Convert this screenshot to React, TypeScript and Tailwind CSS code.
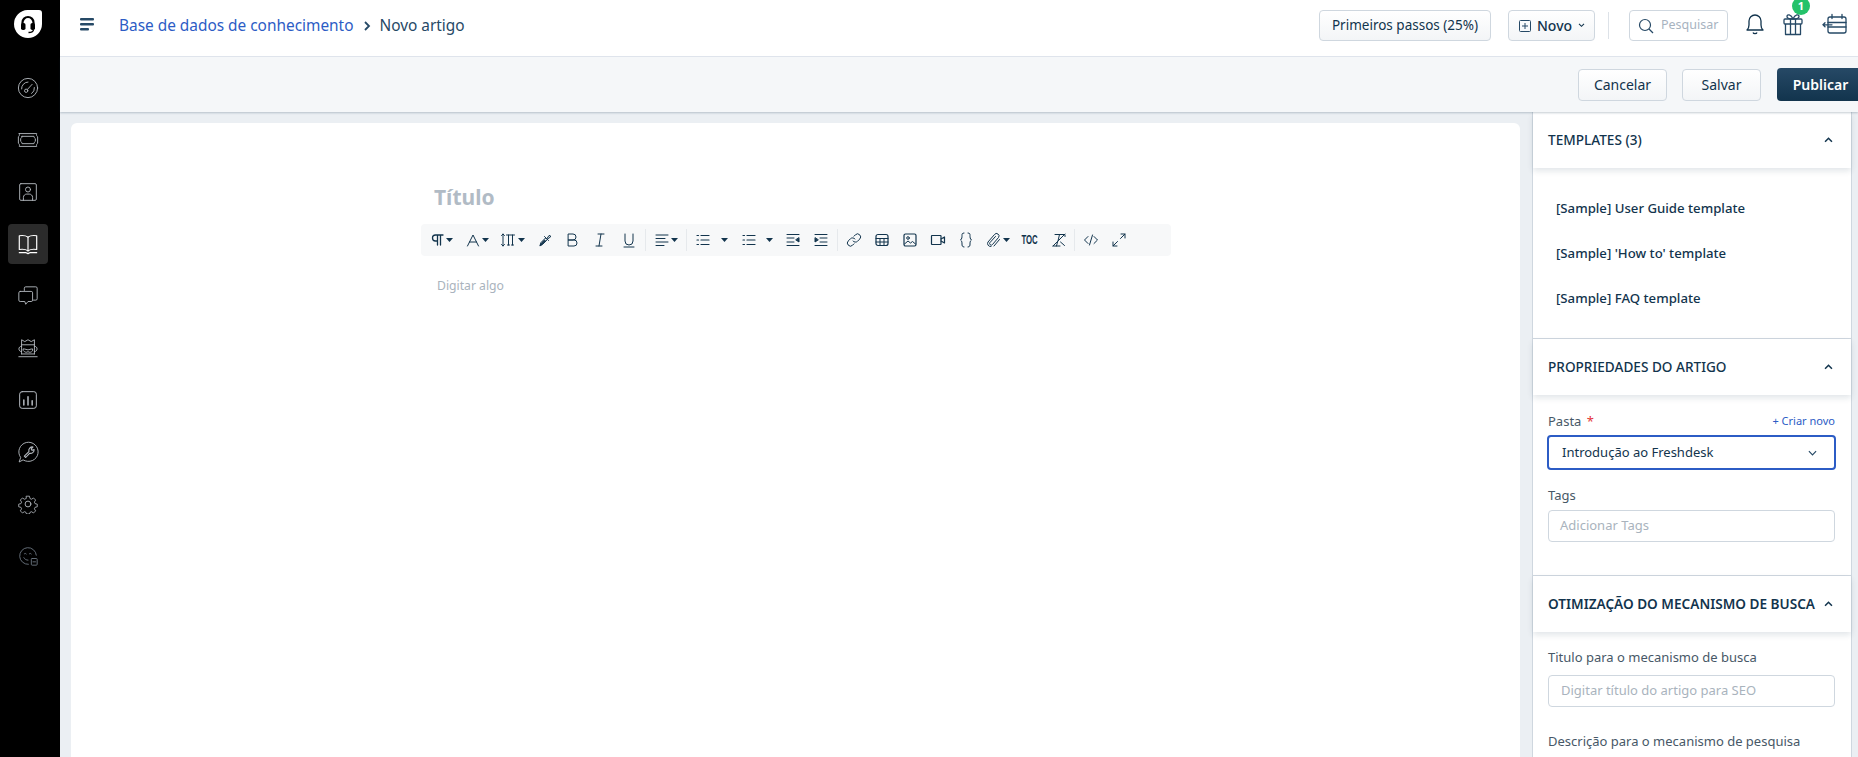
import React from "react";

const ui = "font-['Noto_Sans','Open_Sans',sans-serif]";

type IconProps = { className?: string };

const Svg: React.FC<React.PropsWithChildren<IconProps & { box?: number; sw?: number }>> = ({ className, box = 24, sw = 1.2, children }) => (
  <svg viewBox={`0 0 ${box} ${box}`} fill="none" stroke="currentColor" strokeWidth={sw} strokeLinecap="round" strokeLinejoin="round" className={className}>
    {children}
  </svg>
);

// Sidebar
const Logo = () => (
  <svg viewBox="0 0 28 28" className="h-[28px] w-[28px]">
    <path d="M13.5 0H25a3 3 0 0 1 3 3v11a14 14 0 0 1-14 14A14 14 0 0 1 0 14 14 14 0 0 1 13.5 0z" fill="#fff" />
    <path d="M8.5 15v-2.500a5.500 5.500 0 0 1 11 0V15" fill="none" stroke="#000" strokeWidth="2.200" />
    <rect x="7" y="13" width="4.500" height="7" rx="1.800" fill="#000" />
    <rect x="16.500" y="13" width="4.500" height="7" rx="1.800" fill="#000" />
    <path d="M19.500 19.500c0 2.500-2 3-5 3" fill="none" stroke="#000" strokeWidth="1.300" />
  </svg>
);

const Gauge = () => (
  <Svg className="h-[22px] w-[22px]" sw={1}>
    <circle cx="12" cy="12" r="10.500" />
    <path d="M5 13a7 7 0 0 1 7-7.500" />
    <path d="M19 11.500a7 7 0 0 1-3 6.500" />
    <circle cx="10" cy="15" r="1.800" />
    <path d="M11.300 13.600 16.500 8" />
  </Svg>
);

const Ticket = () => (
  <Svg className="h-[22px] w-[22px]" sw={1}>
    <path d="M2.500 5h19c-.5 1.500 0 3 1 3.500v7c-1 .5-1.500 2-1 3.500h-19c.5-1.500 0-3-1-3.500v-7c1-.5 1.500-2 1-3.500z" />
    <path d="M5.500 8h13c0 1 .5 2 1.500 2.500v3c-1 .5-1.500 1.500-1.500 2.500h-13c0-1-.5-2-1.500-2.500v-3c1-.5 1.500-1.500 1.500-2.500z" />
  </Svg>
);

const Contact = () => (
  <Svg className="h-[20px] w-[20px]" sw={1.100}>
    <rect x="2" y="2" width="20" height="20" rx="1.500" />
    <circle cx="12" cy="9" r="3" />
    <path d="M6.500 22v-3.500c0-2.500 2-4 4-4h3c2 0 4 1.500 4 4V22" />
  </Svg>
);

const Book = () => (
  <Svg className="h-[22px] w-[22px] text-white" sw={1.300}>
    <path d="M12 4.500C10 3 6 2.500 2.500 3v15c3.500-.5 7.500 0 9.500 1.500 2-1.500 6-2 9.500-1.500V3C18 2.500 14 3 12 4.500z" />
    <path d="M12 4.500v15" />
    <path d="M2.500 21.500h7.500l2 1 2-1h7.500" />
  </Svg>
);

const Chat = () => (
  <Svg className="h-[22px] w-[22px]" sw={1}>
    <path d="M8 6V3.500A1.500 1.500 0 0 1 9.500 2h11A1.500 1.500 0 0 1 22 3.500V15a1.500 1.500 0 0 1-1.500 1.500H18" />
    <path d="M3.500 7h12A1.500 1.500 0 0 1 17 8.500v8a1.500 1.500 0 0 1-1.500 1.500H12l-2.500 3-1-3h-5A1.500 1.500 0 0 1 2 16.500v-8A1.500 1.500 0 0 1 3.500 7z" />
  </Svg>
);

const Helmet = () => (
  <Svg className="h-[22px] w-[22px]" sw={1}>
    <path d="M2 21.500h20" />
    <path d="M5 18.500V3l3.500 2L12 3l3.500 2L19 3v15.500" />
    <path d="M5 8.500h14" />
    <path d="M5 10c-4 0-4 6 0 6M19 10c4 0 4 6 0 6" />
    <path d="M7 13c2.500 0 3.500 1 5 1s2.500-1 5-1v2c-1.500 2-3.500 2-5 1-1.500 1-3.500 1-5-1z" />
    <path d="M5 18.500h14" />
  </Svg>
);

const Report = () => (
  <Svg className="h-[20px] w-[20px]" sw={1.200}>
    <rect x="2" y="2" width="20" height="20" rx="3" />
    <path d="M7 12v6M12 8v10M17 13v5" strokeWidth={1.800} />
  </Svg>
);

const Wrench = () => (
  <Svg className="h-[22px] w-[22px]" sw={1}>
    <path d="M2.500 22.500 4 18A10.500 10.500 0 1 1 7 20.800z" />
    <path d="M8 16.500 13 11.500a4 4 0 0 1 4.500-5l-2 2.200 1 1.500 2.200-.8a4 4 0 0 1-5 4L9.500 18z" strokeWidth={1.200} />
  </Svg>
);

const Gear = () => (
  <Svg className="h-[20px] w-[20px]" sw={1.100}>
    <circle cx="12" cy="12" r="3.500" />
    <path d="M10 1.500h4l.7 3.200 2 .9 2.800-1.700 2.800 2.800-1.700 2.800.9 2 3 .7v3.600l-3 .7-.9 2 1.700 2.800-2.800 2.800-2.800-1.700-2 .9-.7 2.200h-4l-.7-2.200-2-.9-2.800 1.700-2.800-2.800 1.700-2.800-.9-2-3-.7v-3.600l3-.7.9-2-1.700-2.800 2.800-2.800 2.800 1.700 2-.9z" transform="translate(1.300 1.300) scale(.89)" />
  </Svg>
);

const Face = () => (
  <Svg className="h-[20px] w-[20px] text-[#6b7580]" sw={1.100}>
    <path d="M22 11a10 10 0 1 0-9.500 11" />
    <path d="M7.500 9.500c.6-.8 1.800-.8 2.400 0M13.500 9.500c.6-.8 1.800-.8 2.400 0" />
    <path d="M7 14c1 2 3 3 5 3" />
    <rect x="16" y="15" width="7" height="8" rx="1" />
    <path d="M18 19h3" />
  </Svg>
);

const NavItem: React.FC<React.PropsWithChildren<{ active?: boolean }>> = ({ active, children }) => (
  <div className={`flex h-[40px] w-[40px] items-center justify-center rounded-[4px] text-[#b5bac0] ${active ? "bg-[#2b2b2b]" : ""}`}>
    {children}
  </div>
);

const Sidebar = () => (
  <aside className="flex h-full w-[60px] shrink-0 flex-col items-center gap-[12px] bg-black pt-[10px]">
    <div className="mb-[18px] -ml-[4px]">
      <Logo />
    </div>
    <div className="-ml-[4px] flex flex-col gap-[12px]">
      <NavItem><Gauge /></NavItem>
      <NavItem><Ticket /></NavItem>
      <NavItem><Contact /></NavItem>
      <NavItem active><Book /></NavItem>
      <NavItem><Chat /></NavItem>
      <NavItem><Helmet /></NavItem>
      <NavItem><Report /></NavItem>
      <NavItem><Wrench /></NavItem>
      <NavItem><Gear /></NavItem>
      <NavItem><Face /></NavItem>
    </div>
  </aside>
);

// Top bar
const btn = "rounded-[4px] border border-[#cfd7df] bg-gradient-to-b from-white to-[#f3f5f7] text-[#12344d]";

const TopBar = () => (
  <header className="flex h-[57px] shrink-0 items-center border-b border-[#e3e8ef] bg-white pb-[5px]">
    <svg viewBox="0 0 14 13" className="ml-[20px] -mt-[3px] h-[13px] w-[14px]" fill="#264966">
      <rect x="0" y="0" width="14" height="2.400" rx="1" />
      <rect x="0" y="5" width="14" height="2.400" rx="1" />
      <rect x="0" y="10" width="9" height="2.400" rx="1" />
    </svg>
    <span className="ml-[25px] text-[15.400px] text-[#2c5cc5]">Base de dados de conhecimento</span>
    <svg viewBox="0 0 8 10" className="ml-[10px] h-[10px] w-[8px]" fill="none" stroke="#264966" strokeWidth="1.800">
      <path d="M2 1l4 4-4 4" />
    </svg>
    <span className="ml-[8px] text-[15.400px] text-[#264966]">Novo artigo</span>

    <div className="ml-auto flex items-center">
      <button className={`${btn} h-[31px] w-[172px] text-[13.500px]`}>Primeiros passos (25%)</button>
      <button className={`${btn} ml-[17px] flex h-[31px] w-[87px] items-center pl-[10px] text-[14px] font-medium`}>
        <svg viewBox="0 0 12 12" className="mr-[6px] h-[12px] w-[12px]" fill="none" stroke="#264966">
          <rect x=".5" y=".5" width="11" height="11" rx="1" />
          <path d="M6 3v6M3 6h6" />
        </svg>
        Novo
        <svg viewBox="0 0 8 6" className="ml-[6px] h-[5px] w-[7px]" fill="none" stroke="#12344d" strokeWidth="1.300">
          <path d="M1 1l3 3 3-3" />
        </svg>
      </button>
      <div className="ml-[13px] h-[27px] w-px bg-[#dde2e8]" />
      <div className="ml-[20px] flex h-[31px] w-[99px] items-center rounded-[4px] border border-[#cfd7df] bg-white pl-[8px]">
        <svg viewBox="0 0 16 16" className="h-[16px] w-[16px]" fill="none" stroke="#264966" strokeWidth="1.200">
          <circle cx="7" cy="7" r="5.500" />
          <path d="M11 11l4 4" />
        </svg>
        <span className="ml-[7px] text-[12.500px] text-[#a7b3bf]">Pesquisar</span>
      </div>
      <svg viewBox="0 0 20 24" className="ml-[17px] -mt-[4px] h-[24px] w-[20px]" fill="none" stroke="#12344d" strokeWidth="1.300" strokeLinejoin="round">
        <path d="M2 18c1.500-1.500 2-3 2-5V9a6 6 0 0 1 12 0v4c0 2 .5 3.500 2 5z" />
        <path d="M8 20.500c.5 1.500 3.500 1.500 4 0" />
      </svg>
      <div className="relative ml-[18px] -mt-[4px] h-[24px] w-[20px]">
        <svg viewBox="0 0 20 24" className="h-[24px] w-[20px]" fill="none" stroke="#264966" strokeWidth="1.300" strokeLinejoin="round">
          <rect x="1" y="7" width="18" height="5" rx="1" />
          <path d="M2.500 12v10.500h15V12M7.500 7v15.500M12.500 7v15.500" />
          <path d="M10 7C8 2 4 2 4 4.500 4 6.500 8 7 10 7zM10 7c2-5 6-5 6-2.500C16 6.500 12 7 10 7z" />
        </svg>
        <span className="absolute -top-[15px] left-[9px] flex h-[18px] w-[18px] items-center justify-center rounded-full bg-[#24c26a] text-[11px] font-bold leading-none text-white">1</span>
      </div>
      <svg viewBox="0 0 26 24" className="ml-[19px] mr-[10px] -mt-[3px] h-[24px] w-[26px]" fill="none" stroke="#264966" strokeWidth="1.300" strokeLinecap="round">
        <rect x="6" y="5" width="18" height="16" rx="2" />
        <path d="M10 2.500v4M20 2.500v4M6 10.500h18M6 15h18" />
        <path d="M10 12.800H1M3 10.800l-2 2 2 2" />
      </svg>
    </div>
  </header>
);

const ActionBar = () => (
  <div className="relative z-10 flex h-[55px] shrink-0 items-center justify-end overflow-hidden bg-[#f5f7f9] shadow-[0_1px_2px_rgba(18,52,77,0.25)]">
    <button className={`${btn} h-[32px] w-[89px] text-[14px]`}>Cancelar</button>
    <button className={`${btn} ml-[15px] h-[32px] w-[79px] text-[14px]`}>Salvar</button>
    <button className="ml-[16px] -mr-[6px] h-[33px] w-[87px] shrink-0 rounded-[4px] bg-gradient-to-b from-[#264966] to-[#12344d] text-[14px] font-semibold text-white">
      Publicar
    </button>
  </div>
);

// Editor toolbar
const Caret: React.FC<IconProps> = ({ className = "" }) => (
  <svg viewBox="0 0 7 4" className={`h-[4px] w-[7px] shrink-0 ${className}`} fill="#12344d">
    <path d="M0 0h7L3.500 4z" />
  </svg>
);

const Tool: React.FC<React.PropsWithChildren<{ className?: string }>> = ({ className = "", children }) => (
  <div className={`flex h-[16px] w-[16px] shrink-0 items-center justify-center text-[#12344d] ${className}`}>{children}</div>
);

const Sep: React.FC<{ className: string }> = ({ className }) => <div className={`h-[22px] w-px shrink-0 bg-[#e6e9ec] ${className}`} />;

const T: React.FC<React.PropsWithChildren> = ({ children }) => <Svg className="h-[16px] w-[16px]" box={16} sw={1}>{children}</Svg>;

const Toolbar = () => (
  <div className="-ml-[13px] flex h-[32px] w-[750px] items-center rounded-[4px] bg-[#f7f8f9] pl-[8px]">
    <Tool><T><path d="M14 3H6.500a3 3 0 0 0 0 6H8.500M8.500 3v10M11.500 3v10" strokeWidth={1.300} /></T></Tool>
    <Caret className="ml-[1px]" />
    <Tool className="ml-[12px]"><T><path d="M2.500 14 8 3l5.500 11M4.500 10h7" /></T></Tool>
    <Caret className="ml-[1px]" />
    <Tool className="ml-[11px]"><T><path d="M3 2v12M1.500 3.500 3 2l1.500 1.500M1.500 12.500 3 14l1.500-1.500M6.500 3h8M8.500 3v10M12.500 3v10M7.500 13h2M11.500 13h2" /></T></Tool>
    <Caret className="ml-[2px]" />
    <Tool className="ml-[12px]"><T><path d="M3 13.500l1-3 4.500-4.500 1.700 1.700L5.500 12.500zM7.500 4.500l4 4M10 6.500l2-3a1.300 1.300 0 0 1 1.500 1.500L10.500 7" /><path d="M3.500 13l2-1 3-3-1-1-3 3z" fill="currentColor" /></T></Tool>
    <Tool className="ml-[11px]"><T><path d="M4.500 2h4.500a3 3 0 0 1 0 6H4.500zM4.500 8h5.500a3 3 0 0 1 0 6H4.500z" /></T></Tool>
    <Tool className="ml-[12px]"><T><path d="M6 2h6M4 14h6M9 2 7 14" /></T></Tool>
    <Tool className="ml-[13px]"><T><path d="M4 2v7a4 4 0 0 0 8 0V2M3 15h10" /></T></Tool>
    <Sep className="ml-[8px]" />
    <Tool className="ml-[8px]"><T><path d="M2 3h12M2 6.500h9M2 10h12M2 13.500h8" /></T></Tool>
    <Caret className="ml-[1px]" />
    <Sep className="ml-[8px]" />
    <Tool className="ml-[8px]"><T><path d="M6 3.500h8M6 8h8M6 12.500h8M2 3.500h1.500M2 8h1.500M2 12.500h1.500" strokeWidth={1.200} /></T></Tool>
    <Caret className="ml-[10px]" />
    <Tool className="ml-[13px]"><T><path d="M6 3.500h8M6 8h8M6 12.500h8M2 3.500h1.500M2 8h1.500M2 12.500h1.500" strokeWidth={1.200} /></T></Tool>
    <Caret className="ml-[9px]" />
    <Tool className="ml-[12px]"><T><path d="M2 2.500h12M2 6h7M2 10h7M2 13.500h12" /><path d="M14 6v4l-3-2z" fill="currentColor" /></T></Tool>
    <Tool className="ml-[12px]"><T><path d="M2 2.500h12M7 6h7M7 10h7M2 13.500h12" /><path d="M2 6v4l3-2z" fill="currentColor" /></T></Tool>
    <Sep className="ml-[8px]" />
    <Tool className="ml-[8px]"><T><path d="M7 9a3 3 0 0 0 4.500.3l2.200-2.200a3 3 0 0 0-4.300-4.300L8 4.200" /><path d="M9 7a3 3 0 0 0-4.500-.3L2.300 8.900a3 3 0 0 0 4.300 4.300L8 11.800" /></T></Tool>
    <Tool className="ml-[12px]"><T><rect x="2" y="2.500" width="12" height="11" rx="2" strokeWidth={1.200} /><path d="M2 6.500h12M2 10h12M6 6.500v7M10 6.500v7" /></T></Tool>
    <Tool className="ml-[12px]"><T><rect x="2" y="2" width="12" height="12" rx="1.500" strokeWidth={1.200} /><circle cx="6" cy="6" r="1.300" /><path d="M2.500 12l3.500-3 2.500 2 2-1.500 3 2.500" /></T></Tool>
    <Tool className="ml-[12px]"><T><rect x="1.500" y="3.500" width="9.500" height="9" rx=".5" strokeWidth={1.200} /><path d="M11 7l3.500-2v6L11 9" strokeWidth={1.200} /></T></Tool>
    <Tool className="ml-[12px]"><T><path d="M6 1c-2 0-2 1-2 2.500s0 3.500-1.500 4.500C4 9 4 10.500 4 12s0 3 2 3M10 1c2 0 2 1 2 2.500s0 3.500 1.500 4.500C12 9 12 10.500 12 12s0 3-2 3" /></T></Tool>
    <Tool className="ml-[12px]"><T><path d="M5 14.500a3 3 0 0 1-3-4.500L8.500 2.500a2.500 2.500 0 0 1 4 3L6.500 12.500a1.500 1.500 0 0 1-2.500-2L9.500 4.500" /><path d="M8 14l5.500-6.500" /></T></Tool>
    <Caret className="ml-[1px]" />
    <Tool className="ml-[12px]"><span className="scale-x-[0.65] text-[12px] font-bold [font-family:'Liberation_Sans',sans-serif]">TOC</span></Tool>
    <Tool className="ml-[13px]"><T><path d="M4 2.500h10v2M8.500 2.500 7 9M2 14h7M5.500 14l1-4M2 14 14 2M9.500 10l4 3.500" /></T></Tool>
    <Sep className="ml-[7px]" />
    <Tool className="ml-[8px]"><T><path d="M5 4.500 1.500 8 5 11.500M11 4.500 14.500 8 11 11.500M9.500 3l-3 10" /></T></Tool>
    <Tool className="ml-[12px]"><T><path d="M2 14l4.500-4.500M2 10v4h4M14 2 9.500 6.500M10 2h4v4" /></T></Tool>
  </div>
);

const Editor = () => (
  <main className="ml-[11px] mt-[11px] min-w-0 flex-1 rounded-t-[6px] bg-white pl-[363px]">
    <h1 className="mt-[59px] text-[21px] font-bold leading-[30px] text-[#b1bbc5]">Título</h1>
    <div className="mt-[12px]"><Toolbar /></div>
    <p className="ml-[3px] mt-[20px] text-[12.200px] leading-[20px] text-[#a9b3bd]">Digitar algo</p>
  </main>
);

// Right panel
const ChevronUp = () => (
  <svg viewBox="0 0 10 7" className="h-[6px] w-[9px] shrink-0" fill="none" stroke="#12344d" strokeWidth="1.800">
    <path d="M1 5.500 5 1.500l4 4" />
  </svg>
);

const SectionHead: React.FC<{ title: string; bold?: boolean }> = ({ title, bold }) => (
  <div className="relative flex h-[56px] items-center justify-between bg-white pl-[15px] pr-[18px] shadow-[0_3px_6px_rgba(18,52,77,0.12)]">
    <span className={`text-[13.600px] text-[#12344d] ${bold ? "font-semibold" : "font-medium"}`}>{title}</span>
    <ChevronUp />
  </div>
);

const Field: React.FC<{ placeholder: string; label: string; className?: string; inputClass: string }> = ({ placeholder, label, className = "", inputClass }) => (
  <div className={className}>
    <label className="block text-[13px] leading-[18px] text-[#475867]">{label}</label>
    <div className={`flex h-[32px] items-center rounded-[4px] border border-[#cfd7df] bg-white text-[13px] text-[#a9b3bd] ${inputClass}`}>
      {placeholder}
    </div>
  </div>
);

const RightPanel = () => (
  <aside className="ml-[12px] w-[320px] shrink-0 border-x border-[#cfd7df] bg-white">
    <SectionHead title="TEMPLATES (3)" />
    <div className="flex h-[170px] flex-col gap-[26px] pl-[23px] pt-[31px]">
      {["[Sample] User Guide template", "[Sample] 'How to' template", "[Sample] FAQ template"].map((t) => (
        <div key={t} className="text-[13.200px] font-medium leading-[19px] text-[#12344d]">{t}</div>
      ))}
    </div>
    <div className="border-t border-[#cfd7df]">
      <SectionHead title="PROPRIEDADES DO ARTIGO" />
    </div>
    <div className="h-[180px] pl-[15px] pr-[16px] pt-[16px]">
      <div className="flex items-center justify-between">
        <span className="text-[13px] leading-[20px] text-[#475867]">Pasta <span className="ml-[2px] text-[#e43538]">*</span></span>
        <span className="text-[11px] leading-[16px] text-[#2c5cc5]">+ Criar novo</span>
      </div>
      <div className="-mx-px mt-[4px] flex h-[35px] items-center justify-between rounded-[4px] border-2 border-[#2c5cc5] pl-[13px] pr-[17px] text-[13px] text-[#12344d]">
        Introdução ao Freshdesk
        <svg viewBox="0 0 10 6" className="h-[6px] w-[9px]" fill="none" stroke="#264966" strokeWidth="1.300">
          <path d="M1 1l4 4 4-4" />
        </svg>
      </div>
      <Field className="mt-[16px]" label="Tags" placeholder="Adicionar Tags" inputClass="mt-[6px] pl-[11px]" />
    </div>
    <div className="border-t border-[#cfd7df]">
      <SectionHead title="OTIMIZAÇÃO DO MECANISMO DE BUSCA" bold />
    </div>
    <div className="pl-[15px] pr-[16px] pt-[16px]">
      <Field label="Titulo para o mecanismo de busca" placeholder="Digitar título do artigo para SEO" inputClass="mt-[9px] pl-[12px]" />
      <label className="mt-[25px] block text-[13px] leading-[18px] text-[#475867]">Descrição para o mecanismo de pesquisa</label>
    </div>
  </aside>
);

export default function App() {
  return (
    <div className={`flex h-[757px] w-[1858px] overflow-hidden bg-[#ebeff3] ${ui}`}>
      <Sidebar />
      <div className="flex min-w-0 flex-1 flex-col">
        <TopBar />
        <ActionBar />
        <div className="flex min-h-0 flex-1 overflow-hidden pr-[6px]">
          <Editor />
          <RightPanel />
        </div>
      </div>
    </div>
  );
}
